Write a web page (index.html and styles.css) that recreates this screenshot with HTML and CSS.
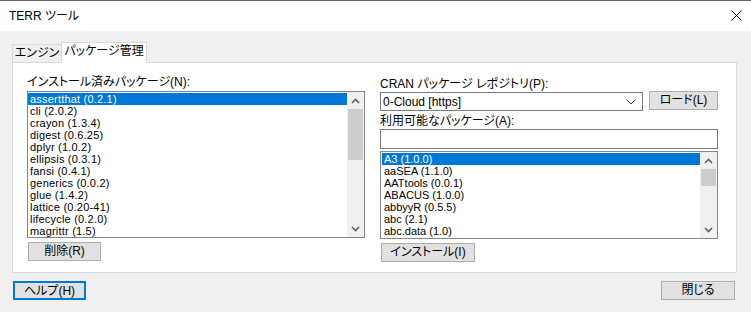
FILE: index.html
```html
<!DOCTYPE html>
<html lang="ja">
<head>
<meta charset="utf-8">
<title>TERR ツール</title>
<link rel="stylesheet" href="styles.css">
</head>
<body>
<div class="window">
  <div class="titlebar">
    <span class="title">TERR ツール</span>
    <svg class="close" width="11" height="11" viewBox="0 0 11 11"><path d="M0.5 0.5 L10.5 10.5 M10.5 0.5 L0.5 10.5" stroke="#000" stroke-width="1" fill="none"/></svg>
  </div>
  <div class="client">
    <div class="tabs">
      <div class="tab">エンジン</div>
      <div class="tab active">パッケージ管理</div>
    </div>
    <div class="panel">
      <div class="col left">
        <div class="label">インストール済みパッケージ(N):</div>
        <div class="listbox tall">
          <div class="items items-l">
            <div class="item sel">assertthat (0.2.1)</div>
            <div class="item">cli (2.0.2)</div>
            <div class="item">crayon (1.3.4)</div>
            <div class="item">digest (0.6.25)</div>
            <div class="item">dplyr (1.0.2)</div>
            <div class="item">ellipsis (0.3.1)</div>
            <div class="item">fansi (0.4.1)</div>
            <div class="item">generics (0.0.2)</div>
            <div class="item">glue (1.4.2)</div>
            <div class="item">lattice (0.20-41)</div>
            <div class="item">lifecycle (0.2.0)</div>
            <div class="item">magrittr (1.5)</div>
          </div>
          <div class="vscroll">
            <div class="arrow"><svg width="9" height="6" viewBox="0 0 9 6"><polyline points="1,5 4.5,1.5 8,5" stroke="#606060" stroke-width="1.6" fill="none"/></svg></div>
            <div class="track"><div class="thumb thumb-l"></div></div>
            <div class="arrow"><svg width="9" height="6" viewBox="0 0 9 6"><polyline points="1,1 4.5,4.5 8,1" stroke="#606060" stroke-width="1.6" fill="none"/></svg></div>
          </div>
        </div>
        <button class="btn btn-del">削除(R)</button>
      </div>
      <div class="col right">
        <div class="label">CRAN パッケージ レポジトリ(P):</div>
        <div class="repo-row">
          <div class="combo">
            <span>0-Cloud [https]</span>
            <svg width="10" height="6" viewBox="0 0 10 6"><polyline points="0.5,0.5 5,5 9.5,0.5" stroke="#333" stroke-width="1" fill="none"/></svg>
          </div>
          <button class="btn btn-load">ロード(L)</button>
        </div>
        <div class="label label2">利用可能なパッケージ(A):</div>
        <div class="textbox"></div>
        <div class="listbox short">
          <div class="items items-r">
            <div class="item sel">A3 (1.0.0)</div>
            <div class="item">aaSEA (1.1.0)</div>
            <div class="item">AATtools (0.0.1)</div>
            <div class="item">ABACUS (1.0.0)</div>
            <div class="item">abbyyR (0.5.5)</div>
            <div class="item">abc (2.1)</div>
            <div class="item">abc.data (1.0)</div>
          </div>
          <div class="vscroll">
            <div class="arrow"><svg width="9" height="6" viewBox="0 0 9 6"><polyline points="1,5 4.5,1.5 8,5" stroke="#606060" stroke-width="1.6" fill="none"/></svg></div>
            <div class="track"><div class="thumb thumb-r"></div></div>
            <div class="arrow"><svg width="9" height="6" viewBox="0 0 9 6"><polyline points="1,1 4.5,4.5 8,1" stroke="#606060" stroke-width="1.6" fill="none"/></svg></div>
          </div>
        </div>
        <button class="btn btn-inst">インストール(I)</button>
      </div>
    </div>
    <div class="footer">
      <button class="btn btn-help">ヘルプ(H)</button>
      <button class="btn btn-close">閉じる</button>
    </div>
  </div>
</div>
</body>
</html>
```

FILE: styles.css
```css
* { box-sizing: border-box; }
html, body { margin: 0; padding: 0; }
body {
  background: #f0f0f0;
  font-family: "Liberation Sans", "Noto Sans CJK JP", sans-serif;
  font-size: 12px;
  color: #000;
  font-feature-settings: "palt";
}
.window {
  width: 751px;
  height: 312px;
  background: #f0f0f0;
  overflow: hidden;
}
.titlebar {
  height: 31px;
  border-top: 1px solid #6b6b6b;
  background: #fff;
  display: flex;
  align-items: center;
  justify-content: space-between;
  padding: 0 9px 1px 9px;
}
.title {
  font-size: 12px;
  line-height: 14px;
}
.close { margin-right: 0; }
.client {
  padding: 11px 14px 0 12px;
}
.tabs {
  display: flex;
  align-items: flex-end;
  height: 20px;
}
.tab {
  height: 18px;
  width: 49px;
  border: 1px solid #d9d9d9;
  border-right: none;
  border-bottom: none;
  background: #f0f0f0;
  line-height: 16px;
  text-align: center;
  font-size: 12px;
}
.tab.active {
  position: relative;
  z-index: 1;
  width: 86px;
  height: 21px;
  margin-bottom: -1px;
  border-right: 1px solid #d9d9d9;
  background: #fff;
  line-height: 17px;
}
.panel {
  width: 725px;
  height: 211px;
  border: 1px solid #d9d9d9;
  background: #fff;
  display: flex;
  gap: 15px;
  padding-left: 14px;
}
.col {
  width: 338px;
  display: flex;
  flex-direction: column;
  align-items: flex-start;
}
.col.left { padding-top: 13px; }
.col.right { padding-top: 15px; }
.label {
  line-height: 12px;
  height: 12px;
  font-size: 12px;
  white-space: nowrap;
}
.listbox {
  width: 338px;
  border: 1px solid #828790;
  background: #fff;
  display: flex;
  overflow: hidden;
}
.listbox.tall { height: 147px; margin-top: 3px; }
.listbox.short { height: 88px; margin-top: 2px; }
.items {
  flex: 1;
  padding-top: 1px;
  overflow: hidden;
  font-size: 11px;
}
.items-l { letter-spacing: 0.2px; }
.items-r { padding-left: 1px; }
.item {
  height: 12px;
  line-height: 12px;
  padding-left: 2px;
  white-space: nowrap;
}
.sel {
  background: #0078d7;
  color: #fff;
}
.vscroll {
  width: 17px;
  background: #f0f0f0;
  display: flex;
  flex-direction: column;
}
.arrow {
  height: 17px;
  display: flex;
  align-items: center;
  justify-content: center;
}
.track {
  flex: 1;
  padding: 0 1px;
}
.thumb {
  background: #cdcdcd;
}
.thumb-l { height: 51px; }
.thumb-r { height: 17px; }
.btn {
  font-family: "Liberation Sans", "Noto Sans CJK JP", sans-serif;
  font-feature-settings: "palt";
  font-size: 12px;
  line-height: 15px;
  height: 19px;
  padding: 0;
  background: #e1e1e1;
  border: 1px solid #adadad;
  color: #000;
  text-align: center;
}
.btn-del { width: 73px; margin-top: 4px; margin-left: 1px; }
.btn-inst { width: 94px; margin-top: 4px; margin-left: 1px; }
.btn-load { width: 69px; height: 19px; }
.repo-row {
  display: flex;
  align-items: flex-start;
  gap: 6px;
  margin-top: 1px;
  height: 20px;
}
.combo {
  margin-top: 1px;
  width: 263px;
  height: 19px;
  border: 1px solid #7a7a7a;
  background: #fff;
  display: flex;
  align-items: center;
  justify-content: space-between;
  padding: 0 6px 0 2px;
  font-size: 12px;
}
.label2 { margin-top: 4px; }
.textbox {
  margin-top: 2px;
  width: 338px;
  height: 20px;
  border: 1px solid #7a7a7a;
  background: #fff;
}
.footer {
  display: flex;
  justify-content: space-between;
  margin-top: 8px;
  padding-left: 1px;
  padding-right: 2px;
}
.btn-help {
  width: 73px;
  border: 2px solid #0078d7;
  line-height: 14px;
}
.btn-close { width: 74px; }
```
